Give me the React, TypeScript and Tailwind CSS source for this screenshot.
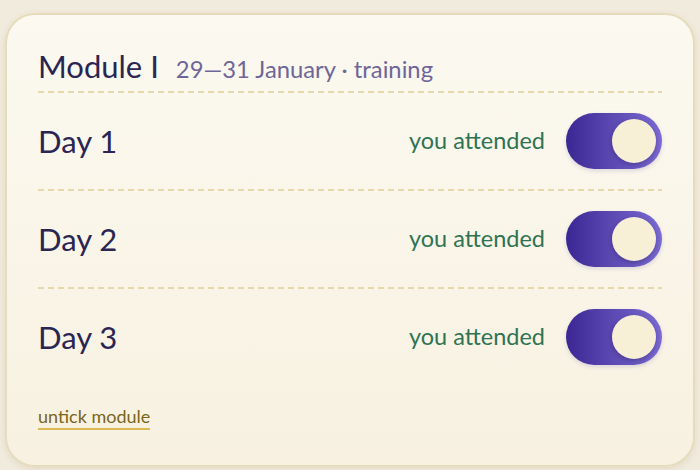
import React from "react";

const Toggle = () => (
  <div className="relative h-[56px] w-[96px] shrink-0 rounded-full bg-[linear-gradient(90deg,#3b2793_0%,#5a47b0_45%,#7b6bd3_100%)] shadow-[0_2px_4px_rgba(60,40,140,0.15)]">
    <div className="absolute right-[6px] top-[6px] h-[44px] w-[44px] rounded-full bg-[#f7efd6] shadow-[0_2px_5px_rgba(30,20,80,0.35)]" />
  </div>
);

const Divider = () => (
  <div className="h-[2px] w-full bg-[repeating-linear-gradient(90deg,#e6d8ad_0px,#e6d8ad_6px,transparent_6px,transparent_10px)]" />
);

const Row = ({ label }: { label: string }) => (
  <div className="flex h-[96px] items-center justify-between">
    <span className="text-[31px] leading-none text-[#2a2552]">{label}</span>
    <div className="flex items-center gap-[21px]">
      <span className="text-[23.5px] leading-none text-[#2f7352]">you attended</span>
      <Toggle />
    </div>
  </div>
);

export default function App() {
  return (
    <div
      className="h-[470px] w-[700px] bg-[#f1ebdd] pl-[5px] pt-[13px]"
      style={{ fontFamily: "Lato, 'Noto Sans', sans-serif" }}
    >
      <div className="flex h-[454px] w-[690px] flex-col rounded-[30px] border-2 border-[#e6dcbc] bg-[linear-gradient(180deg,#fbf9f0_0%,#f8f1e1_100%)] px-[31px] pt-[34px] shadow-[0_2px_6px_rgba(120,100,60,0.12)]">
        <div className="flex items-baseline gap-[17px] pb-[8px]">
          <span className="text-[31px] leading-[34px] text-[#2a2552]">Module I</span>
          <span className="text-[23.8px] leading-none text-[#6e6699]">29—31 January · training</span>
        </div>
        <Divider />
        <Row label="Day 1" />
        <Divider />
        <Row label="Day 2" />
        <Divider />
        <Row label="Day 3" />
        <div className="pt-[20px]">
          <span className="border-b-2 border-[#dcb955] pb-[1px] text-[18px] leading-[22px] text-[#7a6519]">
            untick module
          </span>
        </div>
      </div>
    </div>
  );
}
